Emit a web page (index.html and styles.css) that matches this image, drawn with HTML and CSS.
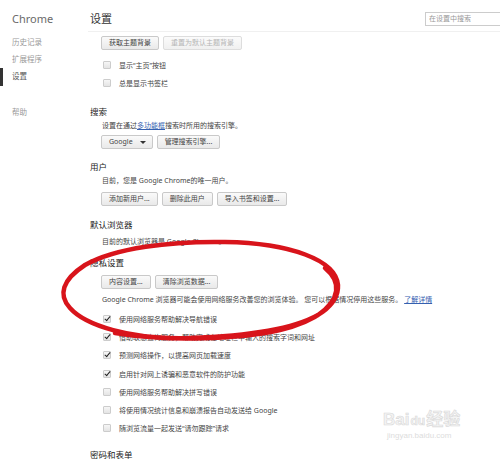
FILE: index.html
```html
<!DOCTYPE html>
<html lang="zh-CN">
<head>
    <meta charset="UTF-8">
    <title>设置</title>
    <link rel="stylesheet" href="styles.css">
</head>
<body>
    <div class="page">
        <aside class="side">
            <div class="brand">Chrome</div>
            <ul class="nav">
                <li>历史记录</li>
                <li>扩展程序</li>
                <li class="active">设置</li>
                <li class="help">帮助</li>
            </ul>
        </aside>

        <main class="main">
            <header class="top">
                <h1>设置</h1>
                <input class="search" type="text" placeholder="在设置中搜索">
            </header>

            <section class="sec first">
                <div class="btns">
                    <button>获取主题背景</button>
                    <button disabled>重置为默认主题背景</button>
                </div>
                <div class="checks">
                    <label class="check"><span class="box"></span>显示“主页”按钮</label>
                    <label class="check"><span class="box"></span>总是显示书签栏</label>
                </div>
            </section>

            <section class="sec search-sec">
                <h2>搜索</h2>
                <p>设置在通过<a href="#">多功能框</a>搜索时所用的搜索引擎。</p>
                <div class="btns">
                    <button class="select">Google<span class="caret"></span></button>
                    <button>管理搜索引擎...</button>
                </div>
            </section>

            <section class="sec users-sec">
                <h2>用户</h2>
                <p>目前，您是 Google Chrome的唯一用户。</p>
                <div class="btns">
                    <button>添加新用户...</button>
                    <button>删除此用户</button>
                    <button>导入书签和设置...</button>
                </div>
            </section>

            <section class="sec default-sec">
                <h2>默认浏览器</h2>
                <p>目前的默认浏览器是 Google Chrome。</p>
            </section>

            <section class="sec privacy-sec">
                <h2>隐私设置</h2>
                <div class="btns">
                    <button>内容设置...</button>
                    <button>清除浏览数据...</button>
                </div>
                <p class="note">Google Chrome 浏览器可能会使用网络服务改善您的浏览体验。 您可以根据情况停用这些服务。 <a href="#">了解详情</a></p>
                <div class="checks privacy">
                    <label class="check on"><span class="box"></span>使用网络服务帮助解决导航错误</label>
                    <label class="check on"><span class="box"></span>借助联想查询服务，帮助完成在地址栏中输入的搜索字词和网址</label>
                    <label class="check on"><span class="box"></span>预测网络操作，以提高网页加载速度</label>
                    <label class="check on"><span class="box"></span>启用针对网上诱骗和恶意软件的防护功能</label>
                    <label class="check"><span class="box"></span>使用网络服务帮助解决拼写错误</label>
                    <label class="check"><span class="box"></span>将使用情况统计信息和崩溃报告自动发送给 Google</label>
                    <label class="check"><span class="box"></span>随浏览流量一起发送“请勿跟踪”请求</label>
                </div>
            </section>

            <section class="sec pass-sec">
                <h2>密码和表单</h2>
            </section>
        </main>

        <!-- hand-drawn red ring around the privacy block -->
        <svg class="ring" width="500" height="459" viewBox="0 0 500 459">
            <path d="M325 268 C 342 282, 340 300, 318 315 C 295 328, 250 336, 190 338 C 130 340, 85 325, 70 308 C 58 295, 62 280, 85 265 C 115 248, 170 241, 225 242 C 290 243, 336 260, 338 285 C 339 305, 315 322, 280 330 C 240 339, 170 342, 115 333"
                  fill="none" stroke="#d8141b" stroke-width="4.5" stroke-linecap="round"/>
        </svg>

        <div class="mark">
            <div class="mark-logo">Bai<span class="paw">du</span>经验</div>
            <div class="mark-url">jingyan.baidu.com</div>
        </div>
    </div>
</body>
</html>
```

FILE: styles.css
```css
html, body {
    margin: 0;
    padding: 0;
    overflow: hidden;
    background: #fff;
}
body {
    font-family: "Noto Sans", "Noto Sans CJK SC", sans-serif;
    color: #444;
    font-size: 7px;
}
.page {
    position: relative;
    display: flex;
    width: 510px;
    height: 459px;
}

/* left navigation */
.side {
    width: 88px;
    flex: none;
}
.brand {
    padding-left: 12px;
    height: 31px;
    padding-top: 5px;
    box-sizing: border-box;
    display: flex;
    align-items: center;
    font-size: 11px;
    color: #6a6a6a;
}
.nav {
    list-style: none;
    margin: 0;
    padding: 3px 0 0 0;
}
.nav li {
    height: 17px;
    line-height: 17px;
    padding-left: 12px;
    font-size: 7.5px;
    color: #999;
}
.nav li.active {
    color: #555;
    border-left: 3px solid #333;
    padding-left: 9px;
    height: 18px;
}
.nav li.help {
    margin-top: 18px;
}

/* main column */
.main {
    flex: 1;
    padding-left: 2px;
}
.top {
    height: 32px;
    padding-top: 5px;
    box-sizing: border-box;
    display: flex;
    align-items: center;
    justify-content: space-between;
    border-bottom: 1px solid #f0f0f0;
    margin-left: -2px;
    padding-left: 2px;
}
.top h1 {
    margin: 0;
    font-size: 11px;
    font-weight: normal;
    color: #333;
}
.search {
    width: 80px;
    height: 14px;
    box-sizing: border-box;
    margin-right: 5px;
    margin-top: 1px;
    border: 1px solid #ccc;
    padding: 0 3px;
    font-family: inherit;
    font-size: 7px;
    color: #333;
    outline: none;
}
.search::placeholder {
    color: #999;
}

.sec h2 {
    margin: 0;
    font-size: 8.5px;
    line-height: 12px;
    font-weight: normal;
    color: #222;
}
.sec p {
    margin: 0;
    padding-left: 12px;
    line-height: 12px;
    color: #444;
}
.sec a {
    color: #3560b0;
    text-decoration: underline;
}

.btns {
    display: flex;
    gap: 4px;
    padding-left: 11px;
}
button {
    height: 14px;
    padding: 0 7px;
    border: 1px solid #c9c9c9;
    border-radius: 2px;
    background: linear-gradient(#fafafa, #e9e9e9);
    font-family: inherit;
    font-size: 7px;
    color: #444;
    line-height: 12px;
    display: flex;
    align-items: center;
}
button:disabled {
    color: #b5b5b5;
    border-color: #ddd;
    background: linear-gradient(#fbfbfb, #f0f0f0);
}
.select {
    padding: 0 6px 0 7px;
}
.caret {
    width: 0;
    height: 0;
    margin-left: 7px;
    border-left: 3px solid transparent;
    border-right: 3px solid transparent;
    border-top: 3px solid #333;
}

.checks {
    padding-left: 13px;
}
.check {
    display: flex;
    align-items: center;
    height: 18px;
    color: #444;
}
.checks.privacy .check {
    height: 18.2px;
}
.box {
    position: relative;
    width: 6px;
    height: 6px;
    margin-right: 8px;
    border: 1px solid #ccc;
    border-radius: 1px;
    background: linear-gradient(#f6f6f6, #e4e4e4);
}
.check.on .box::after {
    content: "";
    position: absolute;
    left: 2px;
    top: -1px;
    width: 2px;
    height: 5px;
    border-right: 1.6px solid #222;
    border-bottom: 1.6px solid #222;
    transform: rotate(40deg);
}

/* vertical rhythm per section */
.first .btns { margin-top: 4px; }
.first .checks { margin-top: 6px; }
.search-sec { margin-top: 14px; }
.search-sec p { margin-top: 2px; }
.search-sec .btns { margin-top: 3px; }
.users-sec { margin-top: 12px; }
.users-sec p { margin-top: 2px; }
.users-sec .btns { margin-top: 5px; }
.default-sec { margin-top: 13px; }
.default-sec p { margin-top: 5px; }
.privacy-sec { margin-top: 9px; }
.privacy-sec .btns { margin-top: 6px; }
.privacy-sec .note { margin-top: 5px; }
.checks.privacy { margin-top: 4px; }
.pass-sec { margin-top: 12px; }

/* overlays */
.ring {
    position: absolute;
    left: 0;
    top: 0;
    pointer-events: none;
}
.mark {
    position: absolute;
    left: 383px;
    top: 410px;
    color: #f3f3f3;
    -webkit-text-stroke: 0.6px #d9d9d9;
    font-family: "Liberation Sans", "Noto Sans CJK SC", sans-serif;
    pointer-events: none;
}
.mark-logo {
    font-size: 17px;
    font-weight: bold;
    line-height: 20px;
}
.paw {
    font-size: 12px;
    margin: 0 1px;
}
.mark-url {
    font-size: 8px;
    line-height: 10px;
    padding-left: 4px;
    -webkit-text-stroke: 0;
    color: #ddd;
}
```
